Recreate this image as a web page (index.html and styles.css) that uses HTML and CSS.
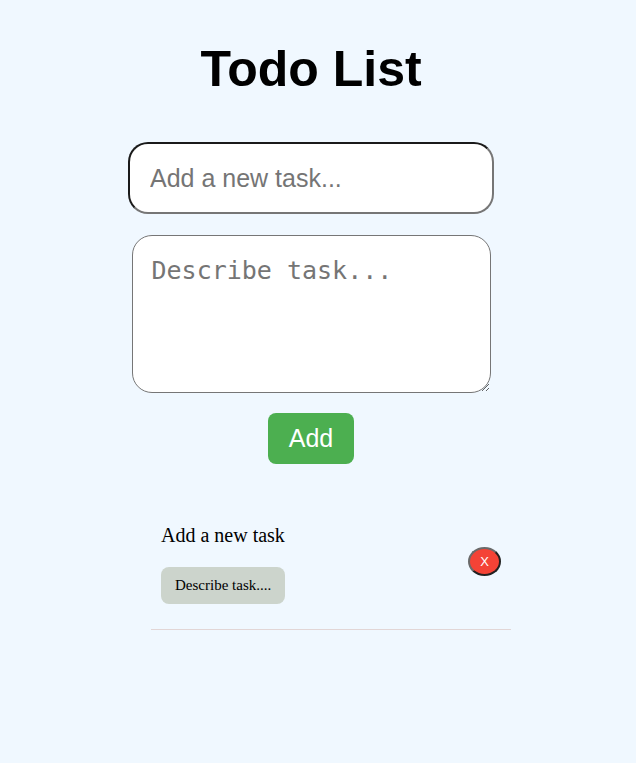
FILE: index.html
```html
<!DOCTYPE html>
<html lang="en">
<head>
<meta charset="utf-8">
<title>Todo List</title>
<link rel="stylesheet" href="styles.css">
</head>
<body>
<div class="app">
  <h1 class="title">Todo List</h1>
  <form class="form">
    <input class="task-input" type="text" placeholder="Add a new task..." autofocus>
    <textarea class="task-desc" placeholder="Describe task..."></textarea>
    <button class="add-btn" type="button">Add</button>
  </form>
  <ul class="list">
    <li class="item">
      <div class="item-body">
        <div class="item-title">Add a new task</div>
        <div class="item-desc">Describe task....</div>
      </div>
      <button class="del-btn" type="button">X</button>
    </li>
  </ul>
</div>
</body>
</html>
```
FILE: styles.css
```css
html, body {
  margin: 0;
  padding: 0;
  background: #f0f8ff;
}
body {
  font-family: "Liberation Serif", serif;
}
.app {
  width: 622px;
  display: flex;
  flex-direction: column;
  align-items: center;
}
.title {
  font-family: "Liberation Sans", Arial, sans-serif;
  font-weight: bold;
  font-size: 50px;
  margin: 41px 0 0;
  line-height: 56px;
  color: #000;
}
.form {
  margin-top: 45px;
  display: flex;
  flex-direction: column;
  align-items: center;
}
.task-input {
  box-sizing: border-box;
  width: 366px;
  height: 72px;
  border: 2px solid;
  border-color: #1a1a1a #767676 #767676 #1a1a1a;
  border-radius: 20px;
  padding: 0 20px;
  font-family: "Liberation Sans", Arial, sans-serif;
  font-size: 25px;
  background: #fff;
  outline: none;
}
.task-input::placeholder,
.task-desc::placeholder {
  color: #757575;
}
.task-desc {
  box-sizing: border-box;
  width: 359px;
  height: 158px;
  margin-top: 21px;
  border: 1px solid #767676;
  border-radius: 20px;
  padding: 20px 19px;
  font-family: "DejaVu Sans Mono", monospace;
  font-size: 25px;
  background: #fff;
  resize: vertical;
  outline: none;
}
.add-btn {
  margin-top: 20px;
  width: 86px;
  height: 51px;
  border: none;
  border-radius: 8px;
  background: #4caf50;
  color: #fff;
  font-family: "Liberation Sans", Arial, sans-serif;
  font-size: 25px;
  padding: 0;
}
.list {
  list-style: none;
  margin: 50px 0 0;
  padding: 0 0 0 40px;
  width: 360px;
}
.item {
  display: flex;
  justify-content: space-between;
  align-items: center;
  padding: 10px 10px 25px 10px;
  border-bottom: 1px solid #e2d6d6;
}
.item-title {
  font-size: 20px;
  line-height: 23px;
  margin-bottom: 20px;
}
.item-desc {
  display: inline-block;
  background: #ccd4cc;
  border-radius: 8px;
  padding: 10px 14px;
  font-size: 15px;
  line-height: 17px;
}
.del-btn {
  box-sizing: border-box;
  width: 33px;
  height: 29px;
  padding: 0;
  margin-bottom: 6px;
  border: 2px solid;
  border-color: #6a6a6a #222 #222 #6a6a6a;
  border-radius: 50%;
  background: #f44336;
  color: #fff;
  font-family: "Liberation Sans", Arial, sans-serif;
  font-size: 13px;
}
```
